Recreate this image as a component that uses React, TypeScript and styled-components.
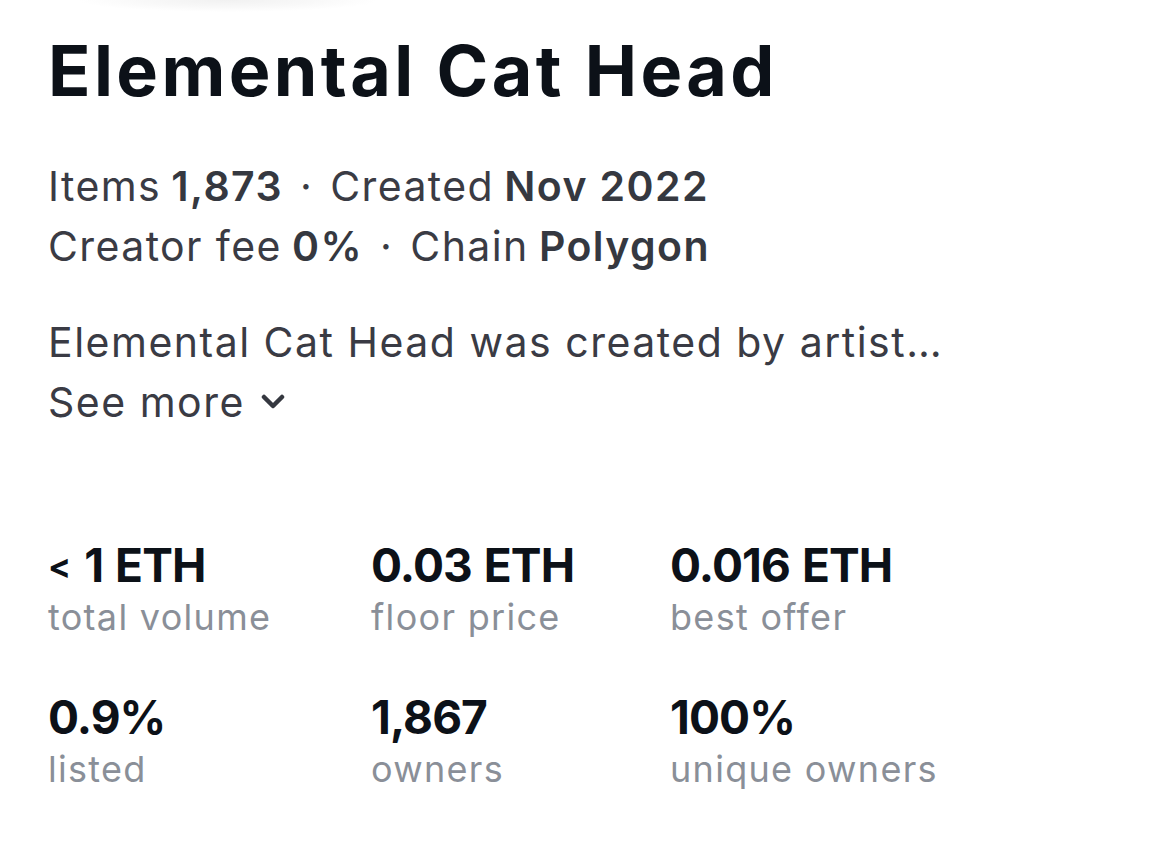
import styled, { createGlobalStyle } from 'styled-components';

const GlobalStyle = createGlobalStyle`
  body {
    margin: 0;
    background: #ffffff;
    font-family: Inter, "Noto Sans", sans-serif;
  }
`;

const Page = styled('main')`
  padding: 0 48px;
  width: 1170px;
  box-sizing: border-box;
`;

const Glow = styled('div')`
  height: 12px;
  width: 300px;
  margin-left: 30px;
  background: radial-gradient(ellipse 50% 100% at 50% 0%, #f1f1f1 0%, #f8f8f8 55%, rgba(255, 255, 255, 0) 100%);
`;

const Title = styled('h1')`
  margin: 19px 0 0;
  font-size: 70px;
  line-height: 80px;
  font-weight: 700;
  color: #0c1118;
  letter-spacing: 3.4px;
`;

const Meta = styled('div')`
  margin-top: 45px;
  font-size: 41px;
  line-height: 60px;
  color: #3a3b44;
  letter-spacing: 1.4px;
`;

const MetaRow = styled('div')`
  display: flex;
  align-items: baseline;
`;

const Strong = styled('b')`
  font-weight: 600;
  color: #353840;
  margin-left: 0.25em;
`;

const Dot = styled('span')`
  margin: 0 17px;
  font-weight: 400;
`;

const Description = styled('div')`
  margin-top: 36px;
  font-size: 41px;
  line-height: 60px;
  color: #3a3b44;
  letter-spacing: 1.5px;
`;

const SeeMore = styled('button')`
  display: flex;
  align-items: center;
  gap: 16px;
  padding: 0;
  border: 0;
  background: none;
  font: inherit;
  letter-spacing: inherit;
  color: inherit;
  line-height: 60px;
`;

const Stats = styled('div')`
  margin-top: 105px;
  display: grid;
  grid-template-columns: 323px 299px auto;
  row-gap: 48px;
`;

const Stat = styled('div')`
  display: flex;
  flex-direction: column;
`;

const Value = styled('span')`
  font-size: 46px;
  line-height: 56px;
  font-weight: 700;
  color: #0c1118;
  letter-spacing: -0.9px;
  word-spacing: 2px;
`;

const Less = styled('span')`
  font-size: 34px;
  line-height: 0;
  margin-right: 14px;
  vertical-align: 4px;
`;

const Label = styled('span')`
  font-size: 36px;
  line-height: 48px;
  color: #8a8f98;
  letter-spacing: 1.3px;
`;

const stats = [
  { value: '1 ETH', label: 'total volume', less: true },
  { value: '0.03 ETH', label: 'floor price' },
  { value: '0.016 ETH', label: 'best offer' },
  { value: '0.9%', label: 'listed' },
  { value: '1,867', label: 'owners' },
  { value: '100%', label: 'unique owners' },
];

const App = () => {
  return (
    <>
      <GlobalStyle />
      <Page>
        <Glow />
        <Title>Elemental Cat Head</Title>
        <Meta>
          <MetaRow>
            Items<Strong>1,873</Strong>
            <Dot>·</Dot>
            Created<Strong>Nov 2022</Strong>
          </MetaRow>
          <MetaRow>
            Creator fee<Strong>0%</Strong>
            <Dot>·</Dot>
            Chain<Strong>Polygon</Strong>
          </MetaRow>
        </Meta>
        <Description>
          <div>Elemental Cat Head was created by artist…</div>
          <SeeMore>
            See more
            <svg width="24" height="16" viewBox="0 0 24 16" fill="none">
              <polyline
                points="3,3 12,12 21,3"
                stroke="#353840"
                strokeWidth="4.5"
                strokeLinecap="round"
                strokeLinejoin="round"
              />
            </svg>
          </SeeMore>
        </Description>
        <Stats>
          {stats.map((s) => (
            <Stat key={s.label}>
              <Value>
                {s.less && <Less>&lt;</Less>}
                {s.value}
              </Value>
              <Label>{s.label}</Label>
            </Stat>
          ))}
        </Stats>
      </Page>
    </>
  );
};

export default App;
